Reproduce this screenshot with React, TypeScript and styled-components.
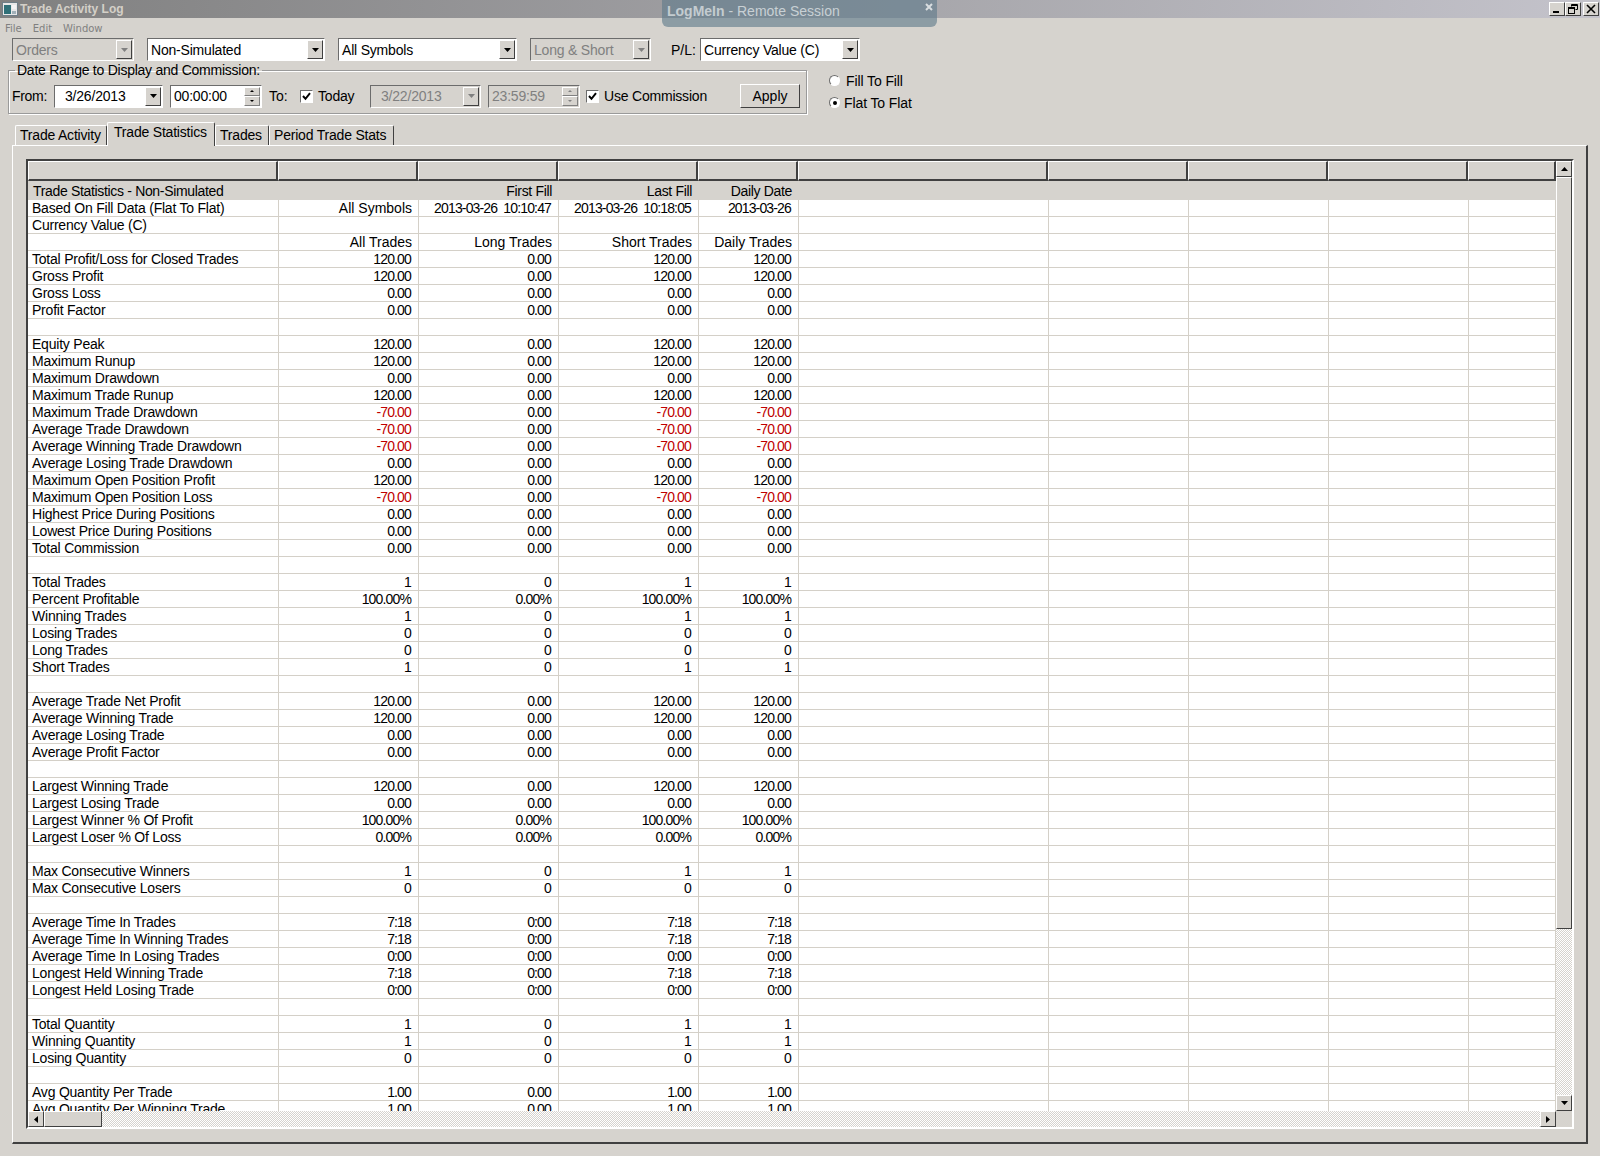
import * as React from 'react'
import styled, { createGlobalStyle } from 'styled-components'

const FACE = '#d6d3ce'
const DARK = '#404040'
const SHADE = '#808080'
const LINE = '#d4d0c8'

type RowData = [string, string?, string?, string?, string?]

const money = (label: string, a = '0.00', c = a, d = a): RowData => [label, a, '0.00', c, d]
const count = (label: string, a = '0', c = a, d = a): RowData => [label, a, '0', c, d]
const time = (label: string, a = '0:00', c = a, d = a): RowData => [label, a, '0:00', c, d]

const rows: RowData[] = [
    ['Based On Fill Data (Flat To Flat)', 'All Symbols', '2013-03-26  10:10:47', '2013-03-26  10:18:05', '2013-03-26'],
    ['Currency Value (C)'],
    ['', 'All Trades', 'Long Trades', 'Short Trades', 'Daily Trades'],
    money('Total Profit/Loss for Closed Trades', '120.00'),
    money('Gross Profit', '120.00'),
    money('Gross Loss'),
    money('Profit Factor'),
    [''],
    money('Equity Peak', '120.00'),
    money('Maximum Runup', '120.00'),
    money('Maximum Drawdown'),
    money('Maximum Trade Runup', '120.00'),
    money('Maximum Trade Drawdown', '-70.00'),
    money('Average Trade Drawdown', '-70.00'),
    money('Average Winning Trade Drawdown', '-70.00'),
    money('Average Losing Trade Drawdown'),
    money('Maximum Open Position Profit', '120.00'),
    money('Maximum Open Position Loss', '-70.00'),
    money('Highest Price During Positions'),
    money('Lowest Price During Positions'),
    money('Total Commission'),
    [''],
    count('Total Trades', '1'),
    ['Percent Profitable', '100.00%', '0.00%', '100.00%', '100.00%'],
    count('Winning Trades', '1'),
    count('Losing Trades'),
    count('Long Trades'),
    count('Short Trades', '1'),
    [''],
    money('Average Trade Net Profit', '120.00'),
    money('Average Winning Trade', '120.00'),
    money('Average Losing Trade'),
    money('Average Profit Factor'),
    [''],
    money('Largest Winning Trade', '120.00'),
    money('Largest Losing Trade'),
    ['Largest Winner % Of Profit', '100.00%', '0.00%', '100.00%', '100.00%'],
    ['Largest Loser % Of Loss', '0.00%', '0.00%', '0.00%', '0.00%'],
    [''],
    count('Max Consecutive Winners', '1'),
    count('Max Consecutive Losers'),
    [''],
    time('Average Time In Trades', '7:18'),
    time('Average Time In Winning Trades', '7:18'),
    time('Average Time In Losing Trades'),
    time('Longest Held Winning Trade', '7:18'),
    time('Longest Held Losing Trade'),
    [''],
    count('Total Quantity', '1'),
    count('Winning Quantity', '1'),
    count('Losing Quantity'),
    [''],
    money('Avg Quantity Per Trade', '1.00'),
    money('Avg Quantity Per Winning Trade', '1.00'),
]

const COLUMNS = '250px 140px 140px 140px 100px 250px 140px 140px 140px 1fr'
// body grid lines sit one pixel right of the header ones
const BODY_COLUMNS = '251px 140px 140px 140px 100px 250px 140px 140px 140px 1fr'

const Arrow = ({ dir = 'down', off }: { dir?: 'up' | 'down' | 'left' | 'right'; off?: boolean }) => {
    const points = { up: '0,4 7,4 3.5,0', down: '0,0 7,0 3.5,4', left: '4,0 4,7 0,3.5', right: '0,0 0,7 4,3.5' }[dir]
    const vertical = dir === 'up' || dir === 'down'
    return (
        <svg width={vertical ? 7 : 4} height={vertical ? 4 : 7} viewBox={vertical ? '0 0 7 4' : '0 0 4 7'}>
            <polygon points={points} fill={off ? SHADE : '#000'} />
        </svg>
    )
}

const Combo = ({ width, text, off, center }: { width: number; text: string; off?: boolean; center?: boolean }) => (
    <ComboBox $width={width} $off={off}>
        <ComboText $center={center}>{text}</ComboText>
        <ComboButton><Arrow off={off} /></ComboButton>
    </ComboBox>
)

const Spin = ({ text, off }: { text: string; off?: boolean }) => (
    <SpinBox $off={off}>
        <ComboText>{text}</ComboText>
        <SpinButtons>
            <SpinButton><SmallArrow $up $off={off} /></SpinButton>
            <SpinButton><SmallArrow $off={off} /></SpinButton>
        </SpinButtons>
    </SpinBox>
)

const Check = () => (
    <CheckBox>
        <svg width="9" height="9" viewBox="0 0 9 9">
            <path d="M1 4 L3.5 6.8 L8 1.2" fill="none" stroke="#000" strokeWidth="2" />
        </svg>
    </CheckBox>
)

export default function App() {
    return (
        <Page>
            <GlobalStyle />
            <TitleBar>
                <TitleIcon viewBox="0 0 16 14" width="16" height="14">
                    <rect x="0.5" y="0.5" width="15" height="13" fill="#e8e8e8" stroke="#6f7f88" />
                    <rect x="2" y="3" width="7" height="9" fill="#2f7078" />
                    <rect x="10" y="3" width="4" height="4" fill="#f4f4f4" />
                    <rect x="10" y="9" width="4" height="3" fill="#a0b0b8" />
                </TitleIcon>
                <TitleText>Trade Activity Log</TitleText>
                <WindowButtons>
                    <WindowButton>
                        <svg width="10" height="10" viewBox="0 0 10 10"><rect x="1" y="7" width="6" height="2" fill="#000" /></svg>
                    </WindowButton>
                    <WindowButton>
                        <svg width="10" height="10" viewBox="0 0 10 10" fill="none" stroke="#000">
                            <path d="M3.5 2.5V0.5H9.5V5.5H7.5" />
                            <path d="M3.5 1.5H9.5" />
                            <rect x="0.5" y="3.5" width="6" height="6" />
                            <path d="M0.5 4.5H6.5" />
                        </svg>
                    </WindowButton>
                    <CloseButton>
                        <svg width="10" height="10" viewBox="0 0 10 10" stroke="#000" strokeWidth="1.6">
                            <path d="M1 1L9 9M9 1L1 9" />
                        </svg>
                    </CloseButton>
                </WindowButtons>
            </TitleBar>
            <SessionTag>
                <b>LogMeIn</b> - Remote Session
                <SessionClose viewBox="0 0 8 8" width="8" height="8">
                    <path d="M1 1L7 7M7 1L1 7" stroke="#d8dde0" strokeWidth="2" />
                </SessionClose>
            </SessionTag>
            <MenuBar>
                <span>File</span>
                <span>Edit</span>
                <span>Window</span>
            </MenuBar>
            <Toolbar>
                <Combo width={122} text="Orders" off />
                <Combo width={178} text="Non-Simulated" />
                <Combo width={179} text="All Symbols" />
                <Combo width={121} text="Long & Short" off />
                <PlLabel>P/L:</PlLabel>
                <Combo width={160} text="Currency Value (C)" />
            </Toolbar>
            <DateArea>
                <Group>
                    <Legend>Date Range to Display and Commission:</Legend>
                    <FromLabel $width={42}>From:</FromLabel>
                    <Combo width={109} text="3/26/2013" center />
                    <Gap $width={7} />
                    <Spin text="00:00:00" />
                    <Gap $width={7} />
                    <Label $width={31}>To:</Label>
                    <Check />
                    <CheckLabel $width={57}>Today</CheckLabel>
                    <Combo width={111} text="3/22/2013" off center />
                    <Gap $width={7} />
                    <Spin text="23:59:59" off />
                    <Gap $width={6} />
                    <Check />
                    <CheckLabel $width={136}>Use Commission</CheckLabel>
                    <ApplyButton>Apply</ApplyButton>
                </Group>
                <RadioColumn>
                    <RadioRow $indent={2}><Radio />Fill To Fill</RadioRow>
                    <RadioRow><Radio $on />Flat To Flat</RadioRow>
                </RadioColumn>
            </DateArea>
            <TabStrip>
                <Tab $width={92}>Trade Activity</Tab>
                <Tab $width={108} $active>Trade Statistics</Tab>
                <Tab $width={54}>Trades</Tab>
                <Tab $width={125}>Period Trade Stats</Tab>
            </TabStrip>
            <TabPanel>
                <TableFrame>
                    <Sheet>
                        <HeaderRow>
                            {Array.from({ length: 10 }, (_, i) => <HeaderCell key={i} />)}
                        </HeaderRow>
                        <Body>
                            <TitleRow>
                                <TitleCell>Trade Statistics - Non-Simulated</TitleCell>
                                <TitleCell />
                                <TitleCell $right>First Fill</TitleCell>
                                <TitleCell $right>Last Fill</TitleCell>
                                <TitleCell $right>Daily Date</TitleCell>
                            </TitleRow>
                            {rows.map((row, i) => (
                                <Row key={i}>
                                    {Array.from({ length: 10 }, (_, c) => {
                                        const text = row[c] ?? ''
                                        return (
                                            <Cell
                                                key={c}
                                                $right={c > 0}
                                                $red={text.startsWith('-')}
                                                $numeric={/^-?\d/.test(text)}
                                            >
                                                {text}
                                            </Cell>
                                        )
                                    })}
                                </Row>
                            ))}
                        </Body>
                    </Sheet>
                    <VerticalBar>
                        <ScrollButton><Arrow dir="up" /></ScrollButton>
                        <VerticalThumb />
                        <Track />
                        <ScrollButton><Arrow dir="down" /></ScrollButton>
                    </VerticalBar>
                    <HorizontalBar>
                        <ScrollButton><Arrow dir="left" /></ScrollButton>
                        <HorizontalThumb />
                        <Track />
                        <ScrollButton><Arrow dir="right" /></ScrollButton>
                    </HorizontalBar>
                    <div />
                </TableFrame>
            </TabPanel>
        </Page>
    )
}

const GlobalStyle = createGlobalStyle`
  html, body {
    margin: 0;
    padding: 0;
    background: ${FACE};
  }
  * {
    box-sizing: border-box;
  }
`

const Page = styled.div`
  position: relative;
  display: flex;
  flex-direction: column;
  width: 1600px;
  height: 1156px;
  overflow: hidden;
  background: ${FACE};
  color: #000;
  font-family: "Liberation Sans", Arial, sans-serif;
  font-size: 14px;
`

const TitleBar = styled.div`
  display: flex;
  align-items: center;
  height: 18px;
  flex: none;
  padding: 0 2px;
  background: linear-gradient(90deg, #808080, #c4c3cb);
`

const TitleIcon = styled.svg`
  flex: none;
`

const TitleText = styled.div`
  margin-left: 2px;
  color: #d4d0c8;
  font-size: 12px;
  font-weight: bold;
`

const WindowButtons = styled.div`
  display: flex;
  margin-left: auto;
  margin-right: -1px;
`

const WindowButton = styled.div`
  display: flex;
  align-items: center;
  justify-content: center;
  width: 16px;
  height: 14px;
  background: ${FACE};
  border: 1px solid;
  border-color: #fff ${DARK} ${DARK} #fff;
`

const CloseButton = styled(WindowButton)`
  margin-left: 2px;
`

const SessionTag = styled.div`
  position: absolute;
  top: 0;
  left: 662px;
  width: 275px;
  height: 27px;
  padding: 3px 0 0 5px;
  border-radius: 0 0 6px 6px;
  background: rgba(96, 122, 138, 0.62);
  color: #c8d0d4;
  font-size: 14px;
  b {
    color: #c4ccd0;
  }
`

const SessionClose = styled.svg`
  position: absolute;
  top: 3px;
  right: 4px;
`

const MenuBar = styled.div`
  display: flex;
  gap: 11px;
  flex: none;
  height: 20px;
  padding: 5px 0 0 5px;
  color: ${SHADE};
  font-family: "DejaVu Sans", sans-serif;
  font-size: 10px;
`

const Toolbar = styled.div`
  display: flex;
  align-items: center;
  gap: 13px;
  flex: none;
  height: 23px;
  padding-left: 12px;
`

const ComboBox = styled.div<{ $width: number; $off?: boolean }>`
  display: flex;
  align-items: center;
  flex: none;
  width: ${p => p.$width}px;
  height: 23px;
  padding: 1px;
  background: ${p => (p.$off ? FACE : '#fff')};
  color: ${p => (p.$off ? SHADE : '#000')};
  border: 1px solid;
  border-color: #6c6c6c #fff #fff #6c6c6c;
`

const ComboText = styled.div<{ $center?: boolean }>`
  flex: 1;
  padding-left: ${p => (p.$center ? '9px' : '2px')};
  letter-spacing: -0.2px;
  white-space: nowrap;
  overflow: hidden;
`

const ComboButton = styled.div`
  display: flex;
  align-items: center;
  justify-content: center;
  flex: none;
  width: 16px;
  height: 100%;
  background: ${FACE};
  border: 1px solid;
  border-color: #fff ${DARK} ${DARK} #fff;
`

const PlLabel = styled.div`
  flex: none;
  width: 28px;
  margin-left: 7px;
  margin-right: -12px;
`

const SpinBox = styled(ComboBox).attrs<{ $off?: boolean }>({ $width: 92 })``

const SpinButtons = styled.div`
  display: flex;
  flex-direction: column;
  flex: none;
  width: 16px;
  height: 100%;
`

const SpinButton = styled.div`
  display: flex;
  align-items: center;
  justify-content: center;
  flex: 1;
  background: ${FACE};
  border: 1px solid;
  border-color: #fff ${SHADE} ${SHADE} #fff;
`

const SmallArrow = styled.span<{ $up?: boolean; $off?: boolean }>`
  width: 0;
  height: 0;
  border-left: 2px solid transparent;
  border-right: 2px solid transparent;
  ${p => (p.$up ? 'border-bottom' : 'border-top')}: 2px solid ${p => (p.$off ? SHADE : '#000')};
`

const DateArea = styled.div`
  display: flex;
  flex: none;
  margin-top: 1px;
  padding-left: 8px;
`

const Group = styled.fieldset`
  display: flex;
  align-items: center;
  width: 799px;
  height: 52px;
  margin: 0;
  padding: 1px 6px 0 3px;
  border: 1px solid #9a9a9a;
  box-shadow: 1px 1px 0 #fff, inset 1px 1px 0 #fff;
`

const Legend = styled.legend`
  margin-left: 3px;
  padding: 0 2px;
  letter-spacing: -0.25px;
  line-height: 16px;
`

const Label = styled.div<{ $width: number }>`
  flex: none;
  width: ${p => p.$width}px;
`

const FromLabel = styled(Label)`
  letter-spacing: -0.3px;
`

const CheckLabel = styled(Label)`
  padding-left: 5px;
  letter-spacing: -0.2px;
`

const Gap = styled.div<{ $width: number }>`
  flex: none;
  width: ${p => p.$width}px;
`

const CheckBox = styled.div`
  display: flex;
  align-items: center;
  justify-content: center;
  flex: none;
  width: 13px;
  height: 13px;
  background: #fff;
  border: 1px solid;
  border-color: #6c6c6c #fff #fff #6c6c6c;
`

const ApplyButton = styled.div`
  display: flex;
  align-items: center;
  justify-content: center;
  flex: none;
  width: 60px;
  height: 24px;
  margin-left: auto;
  border: 1px solid;
  border-color: #fff ${DARK} ${DARK} #fff;
`

const RadioColumn = styled.div`
  display: flex;
  flex-direction: column;
  gap: 5px;
  margin: 10px 0 0 22px;
`

const RadioRow = styled.div<{ $indent?: number }>`
  display: flex;
  align-items: center;
  gap: 4px;
  height: 17px;
  letter-spacing: -0.1px;
  & > span {
    margin-right: ${p => p.$indent ?? 0}px;
  }
`

const Radio = styled.span<{ $on?: boolean }>`
  display: flex;
  align-items: center;
  justify-content: center;
  width: 11px;
  height: 11px;
  border-radius: 50%;
  background: #fff;
  border: 1px solid;
  border-color: #6c6c6c #fff #fff #6c6c6c;
  &::after {
    content: '';
    display: ${p => (p.$on ? 'block' : 'none')};
    width: 4px;
    height: 4px;
    border-radius: 50%;
    background: #000;
  }
`

const TabStrip = styled.div`
  display: flex;
  align-items: flex-end;
  flex: none;
  height: 24px;
  margin-top: 7px;
  padding-left: 15px;
`

const Tab = styled.div<{ $width: number; $active?: boolean }>`
  position: relative;
  z-index: ${p => (p.$active ? 1 : 0)};
  flex: none;
  width: ${p => p.$width}px;
  height: ${p => (p.$active ? '24px' : '20px')};
  margin-bottom: ${p => (p.$active ? '-1px' : '0')};
  padding: ${p => (p.$active ? '1px 0 0 6px' : '1px 0 0 4px')};
  background: ${FACE};
  border: 1px solid;
  border-color: #fff ${DARK} transparent #fff;
  border-bottom: 0;
  border-radius: 2px 2px 0 0;
  letter-spacing: -0.2px;
  white-space: nowrap;
`

const TabPanel = styled.div`
  display: flex;
  flex: none;
  width: 1576px;
  height: 999px;
  margin-left: 12px;
  padding: 13px 12px 13px 13px;
  border: 1px solid;
  border-color: #fff ${DARK} ${DARK} #fff;
  border-width: 1px 2px 2px 1px;
`

const TableFrame = styled.div`
  display: grid;
  flex: 1;
  grid-template-columns: 1fr 16px;
  grid-template-rows: 1fr 16px;
  min-height: 0;
  border: 2px solid;
  border-color: ${DARK} #fff #fff ${DARK};
`

const Sheet = styled.div`
  display: flex;
  flex-direction: column;
  min-width: 0;
  min-height: 0;
  overflow: hidden;
`

const HeaderRow = styled.div`
  display: grid;
  grid-template-columns: ${COLUMNS};
  flex: none;
  height: 20px;
`

const HeaderCell = styled.div`
  background: ${FACE};
  border: 1px solid;
  border-color: #fff ${DARK} ${DARK} #fff;
  border-width: 1px 2px 2px 1px;
`

const Body = styled.div`
  flex: 1;
  min-height: 0;
  overflow: hidden;
  background: #fff;
`

const Row = styled.div`
  display: grid;
  grid-template-columns: ${BODY_COLUMNS};
  height: 17px;
`

const TitleRow = styled(Row)`
  align-items: center;
  height: 19px;
  padding-top: 1px;
  background: ${FACE};
`

const Cell = styled.div<{ $right?: boolean; $red?: boolean; $numeric?: boolean }>`
  height: 17px;
  padding: 0 ${p => (p.$numeric ? '7px' : '6px')} 0 4px;
  border-right: 1px solid ${LINE};
  border-bottom: 1px solid ${LINE};
  color: ${p => (p.$red ? '#c00000' : '#000')};
  letter-spacing: ${p => (p.$numeric ? '-0.85px' : p.$right ? '0' : '-0.22px')};
  line-height: 16px;
  text-align: ${p => (p.$right ? 'right' : 'left')};
  white-space: pre;
  overflow: hidden;
`

const TitleCell = styled.div<{ $right?: boolean }>`
  padding: 0 7px 0 5px;
  letter-spacing: -0.33px;
  line-height: 16px;
  text-align: ${p => (p.$right ? 'right' : 'left')};
  white-space: pre;
`

const VerticalBar = styled.div`
  display: flex;
  flex-direction: column;
  min-height: 0;
`

const HorizontalBar = styled.div`
  display: flex;
  min-width: 0;
`

const ScrollButton = styled.div`
  display: flex;
  align-items: center;
  justify-content: center;
  flex: none;
  width: 16px;
  height: 16px;
  background: ${FACE};
  border: 1px solid;
  border-color: #fff ${DARK} ${DARK} #fff;
`

const Track = styled.div`
  flex: 1;
  background: repeating-conic-gradient(#fff 0 25%, ${FACE} 0 50%) 0 0 / 2px 2px;
`

const VerticalThumb = styled.div`
  flex: none;
  height: 752px;
  background: ${FACE};
  border: 1px solid;
  border-color: #fff ${DARK} ${DARK} #fff;
`

const HorizontalThumb = styled(VerticalThumb)`
  width: 58px;
  height: 16px;
`
